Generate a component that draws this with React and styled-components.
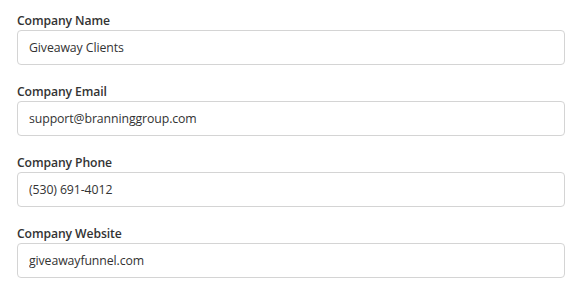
import React from "react";
import styled, { createGlobalStyle } from "styled-components";

const Global = createGlobalStyle`
  html, body { margin: 0; padding: 0; background: #fff; }
  body { font-family: "Segoe UI", "Open Sans", "Noto Sans", sans-serif; }
`;

const Form = styled.div`
  width: 548px;
  padding: 12px 0 0 17px;
  display: flex;
  flex-direction: column;
  gap: 18px;
`;

const Group = styled.div`
  display: flex;
  flex-direction: column;
`;

const Label = styled.label`
  font-size: 12.2px;
  font-weight: 600;
  color: #333;
  line-height: 18px;
  letter-spacing: -0.1px;
`;

const Input = styled.input`
  box-sizing: border-box;
  height: 35px;
  width: 100%;
  border: 1px solid #d4d4d4;
  border-radius: 4px;
  padding: 0 11px;
  font-family: inherit;
  font-size: 12.3px;
  color: #333;
  letter-spacing: -0.1px;
  outline: none;
  background: #fff;
`;

const fields = [
  ["Company Name", "Giveaway Clients"],
  ["Company Email", "support@branninggroup.com"],
  ["Company Phone", "(530) 691-4012"],
  ["Company Website", "giveawayfunnel.com"],
];

export default function App() {
  return (
    <>
      <Global />
      <Form>
        {fields.map(([l, v]) => (
          <Group key={l}>
            <Label>{l}</Label>
            <Input defaultValue={v} />
          </Group>
        ))}
      </Form>
    </>
  );
}
